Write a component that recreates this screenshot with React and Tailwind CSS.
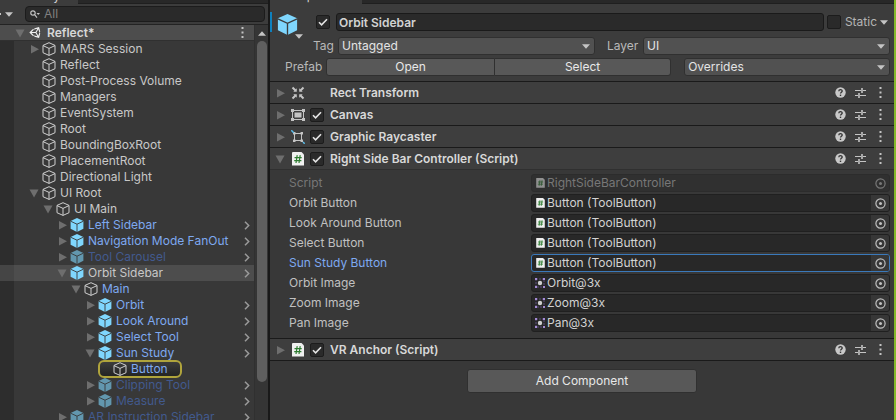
import React from "react";
import { FaUnity } from "react-icons/fa";

const TREE = [
  { name: "MARS Session", depth: 0, fold: "closed" },
  { name: "Reflect", depth: 0 },
  { name: "Post-Process Volume", depth: 0 },
  { name: "Managers", depth: 0 },
  { name: "EventSystem", depth: 0 },
  { name: "Root", depth: 0 },
  { name: "BoundingBoxRoot", depth: 0 },
  { name: "PlacementRoot", depth: 0 },
  { name: "Directional Light", depth: 0 },
  { name: "UI Root", depth: 0, fold: "open" },
  { name: "UI Main", depth: 1, fold: "open" },
  { name: "Left Sidebar", depth: 2, fold: "closed", prefab: true },
  { name: "Navigation Mode FanOut", depth: 2, fold: "closed", prefab: true },
  { name: "Tool Carousel", depth: 2, fold: "closed", prefab: true, off: true },
  { name: "Orbit Sidebar", depth: 2, fold: "open", prefab: true, selected: true },
  { name: "Main", depth: 3, fold: "open", blue: true },
  { name: "Orbit", depth: 4, fold: "closed", prefab: true },
  { name: "Look Around", depth: 4, fold: "closed", prefab: true },
  { name: "Select Tool", depth: 4, fold: "closed", prefab: true },
  { name: "Sun Study", depth: 4, fold: "open", prefab: true },
  { name: "Button", depth: 5, blue: true, pinged: true },
  { name: "Clipping Tool", depth: 4, fold: "closed", prefab: true, off: true },
  { name: "Measure", depth: 4, fold: "closed", prefab: true, off: true },
  { name: "AR Instruction Sidebar", depth: 2, fold: "closed", prefab: true, off: true },
];

const INDENT = ["pl-[28px]", "pl-[42px]", "pl-[56px]", "pl-[70px]", "pl-[84px]", "pl-[98px]"];

const FIELDS = [
  { label: "Script", value: "RightSideBarController", kind: "script", disabled: true },
  { label: "Orbit Button", value: "Button (ToolButton)", kind: "script" },
  { label: "Look Around Button", value: "Button (ToolButton)", kind: "script" },
  { label: "Select Button", value: "Button (ToolButton)", kind: "script" },
  { label: "Sun Study Button", value: "Button (ToolButton)", kind: "script", active: true },
  { label: "Orbit Image", value: "Orbit@3x", kind: "sprite" },
  { label: "Zoom Image", value: "Zoom@3x", kind: "sprite" },
  { label: "Pan Image", value: "Pan@3x", kind: "sprite" },
];

function Triangle({ open }) {
  return (
    <svg viewBox="0 0 12 12" className="h-3 w-3" fill="#6e6e6e">
      <path d={open ? "M1.5 2.5h9L6 10.5z" : "M3 2v8.5l8-4.25z"} />
    </svg>
  );
}

function Foldout({ open, label }) {
  return (
    <button type="button" aria-label={label} aria-expanded={open} className="h-3 w-3 shrink-0">
      <Triangle open={open} />
    </button>
  );
}

function Caret({ className }) {
  return (
    <svg viewBox="0 0 8 5" className={`h-[5px] w-2 shrink-0 ${className || ""}`} fill="#c4c4c4">
      <path d="M0 .3h8L4 4.8z" />
    </svg>
  );
}

function SolidCube({ className, edge }) {
  return (
    <svg viewBox="0 0 14 14" className={`shrink-0 ${className}`}>
      <path d="M7 0l6.4 2.9v7.9L7 14 .6 10.8V2.9z" fill="#7fd6fd" />
      <path d="M.6 3.2L7 6.2l6.4-3M7 6.2V14" fill="none" stroke={edge} strokeWidth=".9" />
    </svg>
  );
}

function WireCube() {
  return (
    <svg viewBox="0 0 14 14" className="h-[14px] w-[14px] shrink-0" fill="none" stroke="#d0d0d0" strokeLinejoin="round">
      <path d="M7 .7l6 2.7v7.3L7 13.4 1 10.7V3.4z" />
      <path d="M1 3.6l6 2.8 6-2.8M7 6.4v7" />
    </svg>
  );
}

function Dots() {
  return (
    <svg viewBox="0 0 3 11" className="h-[11px] w-[3px]" fill="#c4c4c4">
      <path d="M.5 0h2v2h-2zM.5 4.5h2v2h-2zM.5 9h2v2h-2z" />
    </svg>
  );
}

function HelpIcon() {
  return (
    <svg viewBox="0 0 11 11" className="h-[11px] w-[11px]">
      <circle cx="5.5" cy="5.5" r="5.2" fill="#c8c8c8" />
      <path d="M3.8 4.2C3.8 2 7.2 2 7.2 4.1c0 1.2-1.7 1.2-1.7 2.5" fill="none" stroke="#333" strokeWidth="1.3" />
      <path d="M4.8 7.6h1.4V9H4.8z" fill="#333" />
    </svg>
  );
}

function PresetIcon() {
  return (
    <svg viewBox="0 0 11 11" className="h-[11px] w-[11px]" fill="none" stroke="#c4c4c4">
      <path d="M0 3.5h6M8 3.5h3M0 8.5h3M5 8.5h6" />
      <path d="M7 1v5M4 6v5" strokeWidth="1.6" />
    </svg>
  );
}

function ScriptIcon({ className, hash }) {
  return (
    <svg viewBox="0 0 12 14" className={`shrink-0 ${className}`}>
      <path d="M.5 0H9.5L12 2.5V13.5H0V.5z" fill="#f0f0f0" />
      <path d="M5.2 3.2L4 11M8.2 3.2L7 11M2.5 5.6h7.2M2.2 8.6h7.2" fill="none" stroke={hash} strokeWidth="1.2" />
    </svg>
  );
}

function SpriteIcon() {
  return (
    <svg viewBox="0 0 10 10" className="h-[10px] w-[10px] shrink-0">
      <path d="M1 1h8v8H1z" fill="none" stroke="#5c4f7c" strokeDasharray="2 1" />
      <path d="M0 0h2v2H0zM8 0h2v2H8zM0 8h2v2H0zM8 8h2v2H8z" fill="#a48ad4" />
      <circle cx="5" cy="5" r="2.2" fill="#d0d0d0" />
    </svg>
  );
}

function RectTransformIcon() {
  return (
    <svg viewBox="0 0 14 14" className="h-[14px] w-[14px]" fill="#c4c4c4">
      <path d="M5.8 5.8V2.3L2.3 5.8zM8.2 5.8V2.3l3.5 3.5zM5.800 8.200v3.500L2.300 8.200zM8.200 8.200v3.500l3.500-3.500z" />
      <path d="M1.500 1.500l3 3M12.500 1.500l-3 3M1.500 12.500l3-3M12.500 12.500l-3-3" stroke="#c4c4c4" strokeWidth="2" />
    </svg>
  );
}

function CanvasIcon() {
  return (
    <svg viewBox="0 0 14 14" className="h-[14px] w-[14px]" fill="#c4c4c4">
      <path d="M1.5 2.5h11v9h-11z" fill="none" stroke="#c4c4c4" />
      <path d="M3.5 4.5h7v5h-7zM0 1h3v3H0zM11 1h3v3h-3zM0 10h3v3H0zM11 10h3v3h-3z" />
    </svg>
  );
}

function RaycasterIcon() {
  return (
    <svg viewBox="0 0 14 14" className="h-[14px] w-[14px]" fill="#c4c4c4">
      <path d="M3.5 3.5h7v7h-7z" fill="none" stroke="#c4c4c4" />
      <path d="M2 2h2.5v2.5H2zM9.5 2H12v2.5H9.5zM2 9.5h2.5V12H2zM9.5 9.5H12V12H9.5z" />
      <path d="M.3.3l2.4 2.4M12 12l1.7 1.7" stroke="#5cc0ee" strokeWidth="1.5" />
    </svg>
  );
}

function Chevron() {
  return (
    <svg viewBox="0 0 6 9" className="h-[9px] w-[6px]" fill="none" stroke="#9a9a9a" strokeWidth="1.5">
      <path d="M1 .8l3.7 3.7L1 8.2" />
    </svg>
  );
}

function Check({ label, checked }) {
  return (
    <label className="grid h-[14px] w-[14px] shrink-0 *:col-start-1 *:row-start-1">
      <input
        type="checkbox"
        aria-label={label}
        defaultChecked={checked}
        className="peer h-[14px] w-[14px] appearance-none rounded-xs border border-[#1c1c1c] bg-[#2a2a2a]"
      />
      <svg viewBox="0 0 14 14" className="pointer-events-none invisible h-[14px] w-[14px] peer-checked:visible" fill="none" stroke="#e4e4e4" strokeWidth="1.6">
        <path d="M3 7.2l2.6 2.6L11 4.2" />
      </svg>
    </label>
  );
}

function Select({ id, label, value, className }) {
  return (
    <div className={`relative h-[18px] ${className}`}>
      <select
        id={id}
        aria-label={label}
        className="block h-full w-full appearance-none rounded-[3px] border border-[#303030] bg-[#515151] pl-[3px] leading-4 text-[#e4e4e4]"
      >
        <option>{value}</option>
      </select>
      <Caret className="pointer-events-none absolute top-[7px] right-[5px]" />
    </div>
  );
}

function Tab({ children, className }) {
  return (
    <div className="flex h-1 shrink-0 items-end overflow-hidden bg-[#282828]">
      <div className={`flex h-1 items-end overflow-hidden bg-[#3c3c3c] leading-4 text-[#d2d2d2] ${className}`}>{children}</div>
      <div className="h-1 flex-1 border-b border-[#1f1f1f]" />
    </div>
  );
}

function TreeRow({ node }) {
  const color = node.off ? "text-[#425a8e]" : node.selected || !(node.prefab || node.blue) ? "text-[#c8c8c8]" : "text-[#7ea9f0]";
  const content = (
    <>
      {node.prefab ? <SolidCube className={`h-[14px] w-[14px] ${node.off ? "opacity-60" : ""}`} edge="#383838" /> : <WireCube />}
      <span className={`whitespace-nowrap ${color}`}>{node.name}</span>
    </>
  );
  return (
    <li className={`flex h-4 items-center ${node.selected ? "bg-[#4d4d4d]" : ""}`}>
      <div className={`h-4 w-[14px] shrink-0 ${node.selected ? "bg-[#454545]" : "bg-[#2d2d2d]"}`} />
      <div className={`-ml-[14px] flex flex-1 items-center ${INDENT[node.depth]}`}>
        {node.pinged ? (
          <div className="flex h-[18px] items-center gap-1 rounded-md border-2 border-[#b0a43c] bg-linear-to-b from-[#3c3c3c] to-[#242424] pr-3 pl-[13px]">{content}</div>
        ) : (
          <>
            {node.fold ? <Foldout open={node.fold === "open"} label={`Toggle ${node.name}`} /> : <span className="w-3 shrink-0" />}
            <div className="ml-[2px] flex items-center gap-1">{content}</div>
          </>
        )}
      </div>
      {node.prefab && (
        <button type="button" aria-label={`Open ${node.name}`} className="pr-1">
          <Chevron />
        </button>
      )}
    </li>
  );
}

function Hierarchy() {
  return (
    <section className="flex w-[268px] shrink-0 flex-col overflow-hidden bg-[#383838]">
      <Tab className="w-[78px] pl-[5px]">Hierarchy</Tab>
      <div className="flex h-[21px] shrink-0 items-center border-b border-[#232323] bg-[#3c3c3c] pr-[3px]">
        <button type="button" aria-label="Create" className="flex w-[25px] items-center gap-1">
          <span className="h-[2px] w-px bg-[#c4c4c4]" />
          <Caret />
        </button>
        <div className="flex h-4 flex-1 items-center gap-1 rounded-[4px] border border-[#1c1c1c] bg-[#2a2a2a] pl-1">
          <svg viewBox="0 0 10 8" className="h-2 w-[10px] shrink-0" fill="none" stroke="#c4c4c4" strokeWidth="1.2">
            <circle cx="3" cy="3" r="2.2" />
            <path d="M4.6 4.6L7 7.6" />
            <path d="M6.5 3h3.5L8.2 5z" fill="#c4c4c4" stroke="none" />
          </svg>
          <input type="text" aria-label="Search" placeholder="All" className="w-full min-w-0 bg-transparent leading-[14px] outline-none placeholder:text-[#808080]" />
        </div>
      </div>
      <div className="flex min-h-0 flex-1">
        <div className="min-w-0 flex-1 border-r border-[#303030]">
          <div className="flex h-4 items-center border-b border-[#303030] bg-[#4d4d4d] pr-[10px] pl-[14px] font-semibold text-[#d8d8d8]">
            <Foldout open label="Toggle scene" />
            <div className="ml-[3px] flex flex-1 items-center gap-[5px]">
              <FaUnity className="h-[13px] w-[13px] shrink-0 text-[#f0f0f0]" />
              <span>Reflect*</span>
            </div>
            <button type="button" aria-label="Scene menu">
              <Dots />
            </button>
          </div>
          <ul>
            {TREE.map((node) => (
              <TreeRow key={node.name} node={node} />
            ))}
          </ul>
        </div>
        <div className="flex w-[13px] flex-col items-center bg-[#353535]">
          <button type="button" aria-label="Scroll up" className="flex h-4 shrink-0 items-center">
            <Caret className="rotate-180" />
          </button>
          <div className="h-[341px] w-[10px] rounded-full bg-[#5f5f5f]" />
        </div>
      </div>
    </section>
  );
}

function ComponentHeader({ title, icon, open, toggle }) {
  return (
    <header className="flex h-[22px] items-center border-t border-[#1a1a1a] bg-[#3e3e3e] pr-3 pl-1">
      <Foldout open={!!open} label={`Toggle ${title}`} />
      <div className="ml-[5px] flex w-[14px] justify-center">{icon}</div>
      <div className="ml-[5px] w-5">{toggle && <Check label={`Enable ${title}`} checked />}</div>
      <h2 className="flex-1 font-semibold text-[#d8d8d8]">{title}</h2>
      <div className="flex items-center gap-[9px]">
        <button type="button" aria-label="Help">
          <HelpIcon />
        </button>
        <button type="button" aria-label="Presets">
          <PresetIcon />
        </button>
        <button type="button" aria-label="More" className="pl-1">
          <Dots />
        </button>
      </div>
    </header>
  );
}

function ObjectField({ field }) {
  const id = field.label.toLowerCase().replaceAll(" ", "-");
  const border = field.active ? "border-[#3a79bb]" : field.disabled ? "border-[#2c2c2c]" : "border-[#202020]";
  return (
    <div className={`flex items-center ${field.disabled ? "text-[#777777]" : "text-[#c0c0c0]"}`}>
      <label htmlFor={id} className={`w-[242px] shrink-0 ${field.active ? "text-[#7ea9f0]" : ""}`}>
        {field.label}
      </label>
      <div className={`flex h-[18px] flex-1 items-center gap-[2px] overflow-hidden rounded-[3px] border pl-[3px] ${border} ${field.disabled ? "bg-[#303030]" : "bg-[#282828]"}`}>
        {field.kind === "script" ? (
          <span className={`flex w-[10px] shrink-0 justify-center ${field.disabled ? "opacity-50" : ""}`}>
            <ScriptIcon className="h-[10px] w-[9px]" hash="#2f7d32" />
          </span>
        ) : (
          <SpriteIcon />
        )}
        <input id={id} type="text" readOnly disabled={field.disabled} defaultValue={field.value} className={`min-w-0 flex-1 bg-transparent leading-4 outline-none ${field.disabled ? "" : "text-[#d2d2d2]"}`} />
        <button
          type="button"
          aria-label={`Pick ${field.label}`}
          disabled={field.disabled}
          className={`flex h-4 w-[18px] items-center justify-center ${field.disabled ? "" : "bg-[#373737]"}`}
        >
          <svg viewBox="0 0 11 11" className="h-[11px] w-[11px]" fill="none" stroke="currentColor" strokeWidth="1.2">
            <circle cx="5.5" cy="5.5" r="4.6" />
            <circle cx="5.5" cy="5.5" r="1.5" fill="currentColor" stroke="none" />
          </svg>
        </button>
      </div>
    </div>
  );
}

function ObjectHeader() {
  return (
    <div className="flex flex-col gap-[3px] bg-[#3c3c3c] pt-2 pr-1 pb-[5px]">
      <div className="flex items-start">
        <div className="h-5 w-[2px] bg-[#0f81be]" />
        <button type="button" aria-label="Select icon" className="flex w-[31px] items-end pt-[2px] pl-[5px]">
          <SolidCube className="h-[21px] w-[21px]" edge="#3c3c3c" />
          <Caret className="-mr-2 -ml-[3px] translate-y-1" />
        </button>
        <div className="flex flex-1 flex-col gap-[6px] pt-px pl-[13px]">
          <div className="flex h-[18px] items-center">
            <Check label="Active" checked />
            <input
              type="text"
              aria-label="Name"
              defaultValue="Orbit Sidebar"
              className="ml-[6px] h-[18px] min-w-0 flex-1 rounded-[3px] border border-[#1a1a1a] bg-[#2a2a2a] pl-[2px] font-semibold text-[#d2d2d2]"
            />
            <div className="ml-[3px]">
              <Check label="Static" />
            </div>
            <button type="button" className="ml-1 flex items-center gap-[3px] pr-[2px] text-[#b4b4b4]">
              Static
              <Caret />
            </button>
          </div>
          <div className="flex items-center">
            <label htmlFor="tag" className="-ml-[3px] w-[22px]">
              Tag
            </label>
            <Select id="tag" value="Untagged" className="ml-[3px] flex-[257]" />
            <label htmlFor="layer" className="ml-3 w-[33px]">
              Layer
            </label>
            <Select id="layer" value="UI" className="ml-[3px] flex-[247]" />
          </div>
        </div>
      </div>
      <div className="flex items-center pl-[15px]">
        <span className="w-[41px]">Prefab</span>
        <button type="button" className="h-[18px] flex-[168] rounded-l-[3px] border border-[#303030] bg-[#585858] leading-4 text-[#e8e8e8]">
          Open
        </button>
        <button type="button" className="h-[18px] flex-[176] rounded-r-[3px] border border-l-0 border-[#303030] bg-[#585858] leading-4 text-[#e8e8e8]">
          Select
        </button>
        <Select label="Overrides" value="Overrides" className="ml-[13px] flex-[207]" />
      </div>
    </div>
  );
}

function Inspector() {
  const scriptIcon = <ScriptIcon className="h-[14px] w-3" hash="#2f7d32" />;
  return (
    <section className="flex min-w-0 flex-1 flex-col bg-[#383838]">
      <Tab className="w-[92px] pl-5">Inspector</Tab>
      <ObjectHeader />
      <ComponentHeader title="Rect Transform" icon={<RectTransformIcon />} />
      <ComponentHeader title="Canvas" icon={<CanvasIcon />} toggle />
      <ComponentHeader title="Graphic Raycaster" icon={<RaycasterIcon />} toggle />
      <ComponentHeader title="Right Side Bar Controller (Script)" icon={scriptIcon} toggle open />
      <div className="flex flex-col gap-[2px] border-t border-[#303030] pt-1 pr-1 pb-[6px] pl-[19px]">
        {FIELDS.map((field) => (
          <ObjectField key={field.label} field={field} />
        ))}
      </div>
      <div className="border-b border-[#1a1a1a]">
        <ComponentHeader title="VR Anchor (Script)" icon={scriptIcon} toggle />
      </div>
      <button type="button" className="mt-2 h-6 w-[230px] self-center rounded-[3px] border border-[#303030] bg-[#585858] text-[#e8e8e8]">
        Add Component
      </button>
    </section>
  );
}

export default function App() {
  return (
    <main className="flex h-screen overflow-hidden bg-[#191919] font-['Inter',sans-serif] text-[12px] leading-4 text-[#b8b8b8]">
      <Hierarchy />
      <div className="w-[2px] shrink-0" />
      <Inspector />
      <div className="w-[2px] shrink-0 bg-[#84b82a]" />
    </main>
  );
}
